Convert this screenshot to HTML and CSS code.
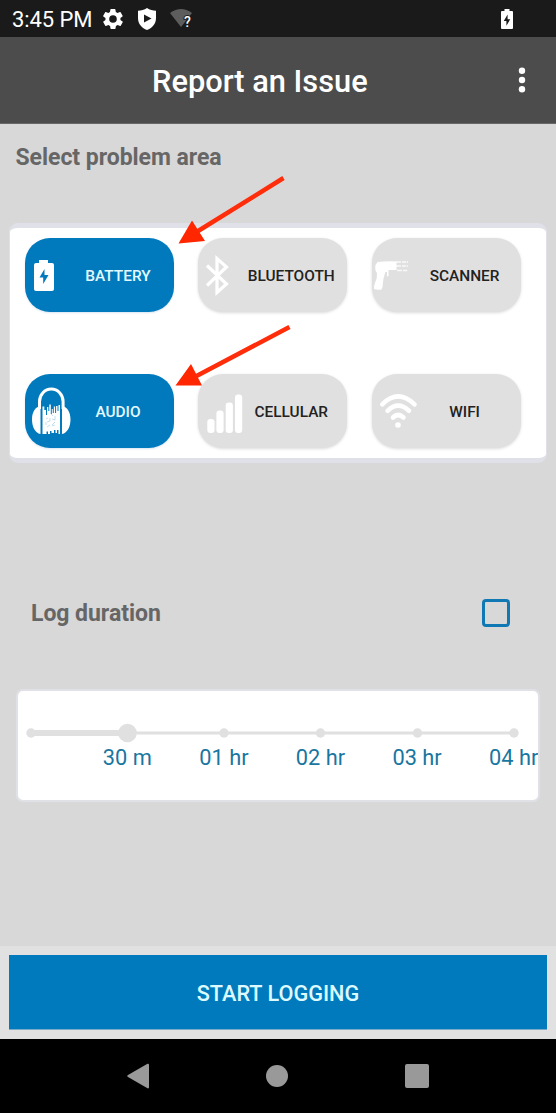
FILE: index.html
```html
<!DOCTYPE html>
<html lang="en">
<head>
<meta charset="utf-8">
<title>Report an Issue</title>
<link rel="stylesheet" href="styles.css">
</head>
<body>
<div class="screen">
  <div class="status">
    <span class="time">3:45 PM</span>
    <svg class="i-gear" width="20" height="20" viewBox="2 2 20 20" fill="#fff"><path fill-rule="evenodd" d="M19.4 13a7.500 7.500 0 0 0 0-2l2.100-1.600a.5.5 0 0 0 .1-.6l-2-3.500a.5.5 0 0 0-.6-.2l-2.500 1a7 7 0 0 0-1.700-1l-.4-2.600a.5.5 0 0 0-.5-.4h-4a.5.5 0 0 0-.5.4L9 5.100a7.500 7.500 0 0 0-1.700 1l-2.500-1a.5.5 0 0 0-.6.2l-2 3.500a.5.5 0 0 0 .1.600L4.500 11a8 8 0 0 0 0 2l-2.100 1.600a.5.5 0 0 0-.1.600l2 3.500c.1.200.4.300.6.200l2.500-1a7 7 0 0 0 1.700 1l.4 2.600c0 .3.200.4.500.4h4c.3 0 .5-.1.500-.4l.4-2.600a7 7 0 0 0 1.700-1l2.500 1c.2.100.5 0 .6-.2l2-3.500a.5.5 0 0 0-.1-.600zM12 15.800a3.800 3.800 0 1 1 0-7.600 3.800 3.800 0 0 1 0 7.600z"/></svg>
    <svg class="i-shield" width="18" height="22" viewBox="0 0 18 22"><path fill="#fff" d="M9 0C6.500 2 3 2.700 0 2.800V10c0 6 4 10 9 12 5-2 9-6 9-12V2.800C15 2.700 11.500 2 9 0z"/><path fill="#1a1a1a" d="M6 6.500v8l7.500-4z"/></svg>
    <svg class="i-net" width="23" height="19" viewBox="0 0 23 19"><path fill="#5d5d5d" d="M0 4Q11-4 22 4L11 18z"/><text x="14" y="17.500" class="q">?</text></svg>
    <svg class="i-batt" width="12" height="20" viewBox="0 0 12 20"><path fill="#fff" d="M3.500 0h5v2H11a1 1 0 0 1 1 1v16a1 1 0 0 1-1 1H1a1 1 0 0 1-1-1V3a1 1 0 0 1 1-1h2.500z"/><path fill="#1a1a1a" d="M6.600 5.500 2.800 12h2.600v4.800L9.200 10.300H6.600z"/></svg>
  </div>
  <header class="bar">
    <h1 class="title">Report an Issue</h1>
    <svg class="more" width="8" height="26" viewBox="0 0 8 26" fill="#fff"><circle cx="4" cy="3.700" r="3.200"/><circle cx="4" cy="13" r="3.200"/><circle cx="4" cy="22.300" r="3.200"/></svg>
  </header>
  <main class="content">
    <h2 class="heading">Select problem area</h2>
    <section class="areas">
      <button class="area on"><svg class="ico" viewBox="0 0 37 74"><path fill="#fff" d="M14 22h9v3h4a2 2 0 0 1 2 2v24a2 2 0 0 1-2 2H11a2 2 0 0 1-2-2V27a2 2 0 0 1 2-2h3z"/><path fill="#007abd" d="M19.500 31 14.500 39.500h3.700V46l5.300-9h-4z"/></svg><span class="label">BATTERY</span></button>
      <button class="area"><svg class="ico" viewBox="0 0 37 74" fill="none" stroke="#fff" stroke-width="3.200"><path d="M9 27.500 28.500 46 19 54.500v-34l9.500 8.500L9 47.500"/></svg><span class="label">BLUETOOTH</span></button>
      <button class="area"><svg class="ico" viewBox="0 0 37 74"><path fill="#fff" d="M4 24q8-1 19-.5v8.500h-8v6l-1.500.5V34h-1.700q-2.500 7-2.800 15l-1 2.500q-4 .8-7.500-.5-.3-3 1-6 2.500-5 2-10Q1 32 2 27z" transform="translate(1.500)"/><path stroke="#fff" stroke-opacity=".8" stroke-width="1.300" stroke-dasharray="5 1 4 .7" d="M24 24h12M24 28h12M25 32.500h11"/></svg><span class="label">SCANNER</span></button>
      <button class="area on"><svg class="ico" viewBox="0 0 37 74"><path fill="none" stroke="#fff" stroke-width="3" d="M14.500 35V27.500a11.800 12.500 0 0 1 23.600 0V35"/><path fill="#fff" d="M15.500 32C10 33 7 38.500 7 45.500s3 13.500 8.500 14.500zM37 32c5.500 1 8.500 6.500 8.500 13.500S42.500 59 37 60z"/><path fill="#fff" d="M17.500 32.500h1.800V36h1.700v5h1v-8h1.300v4h1v-6.500h1.500V40h1v-5h1v4h1v-6.500h1.300V39h1v-7h1.400v5h1v-6H35v29h-1.500v-4H32v3h-1.500v-3H29v3h-2.500v-2H25v3h-2v-2.500h-1.500V60h-4z"/><path stroke="#007abd" stroke-width=".6" stroke-opacity=".4" fill="none" d="m21 45 2-1m3-4 2 2m-6 6 3-1m2-2 3 1m-8 7 3-2m2 0 3-3m-9 0v3m4-7v3m5-5v4m-3 6 3-1"/></svg><span class="label">AUDIO</span></button>
      <button class="area"><svg class="ico" viewBox="0 0 37 74" fill="#fff"><rect x="9.300" y="45" width="7.200" height="14" rx="3"/><rect x="18.400" y="36.500" width="7.200" height="22.500" rx="3"/><rect x="27.700" y="28.500" width="7.200" height="30.500" rx="3"/><rect x="37" y="20.500" width="7.200" height="38.500" rx="3"/></svg><span class="label">CELLULAR</span></button>
      <button class="area"><svg class="ico" viewBox="0 0 37 74" fill="none" stroke="#fff" stroke-width="4.600" stroke-linecap="round"><path d="M10.300 30.300Q26 14.500 42.500 30.300M15.600 36.800Q26 26.500 37 36.800M21 43.500Q26 38.500 31.500 43.500"/><circle cx="26" cy="51" r="2.800" fill="#fff" stroke="none"/></svg><span class="label">WIFI</span></button>
    </section>
    <div class="log-row">
      <h2 class="heading">Log duration</h2>
      <span class="check"></span>
    </div>
    <section class="duration">
      <svg class="track" width="520" height="24" viewBox="0 0 520 24" fill="#e0e0e0"><path d="M14 10.500h483v3H14z"/><path d="M14 9h97v6H14z"/><circle cx="14" cy="12" r="4.700"/><circle cx="110.500" cy="12" r="9.300"/><circle cx="207" cy="12" r="4.700"/><circle cx="303.500" cy="12" r="4.700"/><circle cx="400.500" cy="12" r="4.700"/><circle cx="497" cy="12" r="4.700"/></svg>
      <div class="ticks"><span>30 m</span><span>01 hr</span><span>02 hr</span><span>03 hr</span><span>04 hr</span></div>
    </section>
  </main>
  <footer class="footer"><button class="start">START LOGGING</button></footer>
  <nav class="nav">
    <svg width="22" height="26" viewBox="0 0 22 26" fill="#999"><path d="M20.500.8 1 12a1.200 1.200 0 0 0 0 2l19.500 11.300q1.500.5 1.500-1V2q0-1.500-1.500-1.200z"/></svg>
    <svg width="22" height="22" viewBox="0 0 22 22" fill="#999"><circle cx="11" cy="11" r="11"/></svg>
    <svg width="24" height="24" viewBox="0 0 24 24" fill="#999"><rect width="24" height="24" rx="2"/></svg>
  </nav>
  <svg class="arrows" width="556" height="1113" viewBox="0 0 556 1113"><g stroke="#ff2d0a" stroke-width="4.500"><path d="m283.500 178-87 54M289.500 327l-93 49"/></g><g fill="#ff2600"><path d="m178.500 243.500 13.500-23 13 20.500zM175.500 385.500 191 364l11 21.500z"/></g></svg>
</div>
</body>
</html>
```
FILE: styles.css
```css
* { box-sizing: border-box; }
body { margin: 0; font-family: Roboto, "Liberation Sans", sans-serif; }
h1, h2 { margin: 0; }
button { border: 0; padding: 0; font-family: inherit; }
svg { display: block; flex: none; }
.screen { position: relative; width: 556px; height: 1113px; display: flex; flex-direction: column; background: #d8d8d8; overflow: hidden; }
.status { height: 37px; background: #1a1a1a; color: #fff; display: flex; align-items: center; padding: 0 43px 0 12px; }
.time { font-size: 22px; font-weight: 450; letter-spacing: -.1px; width: 91px; white-space: nowrap; line-height: 37px; padding-top: 1px; }
.i-gear { margin-right: 15px; }
.i-shield { margin-right: 14px; }
.i-batt { margin-left: auto; }
.q { font-size: 14px; font-weight: 500; fill: #fff; stroke: #1a1a1a; stroke-width: 2px; paint-order: stroke; }
.bar { height: 87px; background: #4c4c4c; display: flex; align-items: center; padding: 0 30px 0 152px; justify-content: space-between; border-bottom: 1px solid #686868; }
.title { color: #fff; font-size: 30.8px; font-weight: 500; line-height: 40px; padding-top: 4px; white-space: nowrap; }
.content { height: 822px; padding: 19px 9px 0; }
.heading { font-size: 23px; line-height: 30px; font-weight: 700; letter-spacing: -.04px; color: #666; white-space: nowrap; }
.content > .heading { padding-left: 6.500px; }
.areas { margin-top: 50px; height: 240px; background: #fff; border: solid #dfe0e8; border-width: 5px 1px; border-radius: 9px; padding: 10px 0 0 15px; display: grid; grid-template-columns: repeat(3, 149px); grid-template-rows: 74px 74px; column-gap: 24.300px; row-gap: 62px; }
.area { display: flex; align-items: center; border-radius: 25px; background: #e0e0e0; color: #222; box-shadow: 0 1px 3px rgba(0,0,0,.15); }
.area.on { background: #007abd; color: #e5faff; box-shadow: 0 1px 2px rgba(0,90,160,.15); }
.ico { width: 37px; height: 74px; overflow: visible; }
.label { flex: 1; text-align: center; font-size: 15.400px; font-weight: 500; line-height: 20px; padding: 2px 0 0; }
.log-row { margin-top: 135px; padding: 0 37px 0 22px; height: 30px; display: flex; justify-content: space-between; align-items: center; }
.log-row .heading { padding-top: 2px; }
.check { width: 28px; height: 28px; border: 3px solid #1079b4; border-radius: 4px; }
.duration { margin: 61px 7px 0 6.500px; height: 113px; background: #fff; border: 2px solid #e0e1e6; border-radius: 7px; padding-top: 30px; overflow: hidden; }
.track { margin-left: -1px; }
.ticks { display: grid; grid-template-columns: repeat(5, 96.600px); padding-left: 61.500px; width: 560px; }
.ticks span { text-align: center; font-size: 21.800px; line-height: 26px; color: #1976a0; }
.footer { height: 93px; background: #e1e1e1; padding: 9px 9px 0; }
.start { width: 538px; height: 75px; background: #007abd; color: #dcfaff; font-size: 21.700px; font-weight: 500; padding-top: 3px; border-bottom: 1px solid #75aacb; }
.nav { height: 74px; background: #000; display: flex; justify-content: space-between; align-items: center; padding: 0 127px; }
.arrows { position: absolute; left: 0; top: 0; pointer-events: none; }
```
